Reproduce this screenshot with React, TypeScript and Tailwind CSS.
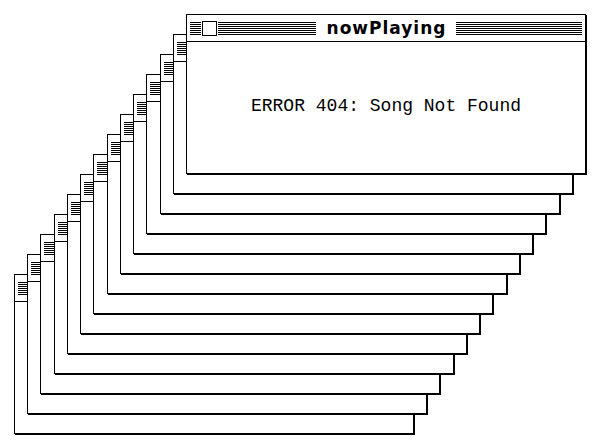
const COUNT = 14

function Stripes({ className = "" }: { className?: string }) {
  return (
    <div
      className={`h-[13px] bg-[repeating-linear-gradient(to_bottom,#000_0px,#000_1px,transparent_1px,transparent_2px)] ${className}`}
    />
  )
}

function Window({ index, front }: { index: number; front: boolean }) {
  const left = 14 + (index * 172) / 13
  const top = 274 - index * 20
  return (
    <div
      className="absolute w-[400px] h-[160px] bg-white border border-black shadow-[1px_1px_0_0_#000] flex flex-col"
      style={{ left, top }}
    >
      {/* title bar */}
      <div className="h-[27px] border-b border-black flex items-center px-[3px]">
        {front ? (
          <>
            <div className="flex-1 flex items-center">
              <Stripes className="w-[11px]" />
              <div className="w-[15px] h-[15px] border border-black bg-white mx-[1px]" />
              <Stripes className="flex-1" />
            </div>
            <div className="pl-[11px] pr-[10px] font-['DejaVu_Sans',sans-serif] font-bold text-[17px] leading-none tracking-[1px] text-black">
              nowPlaying
            </div>
            <Stripes className="flex-1" />
          </>
        ) : (
          <Stripes className="flex-1" />
        )}
      </div>

      {/* content */}
      <div className="flex-1 flex items-center justify-center">
        {front && (
          <span className="font-['Liberation_Mono',monospace] text-[18px] text-black pb-[2px]">
            ERROR 404: Song Not Found
          </span>
        )}
      </div>
    </div>
  )
}

export default function App() {
  return (
    <div className="relative w-[600px] h-[448px] bg-white overflow-hidden">
      {Array.from({ length: COUNT }).map((_, i) => (
        <Window key={i} index={i} front={i === COUNT - 1} />
      ))}
    </div>
  )
}
